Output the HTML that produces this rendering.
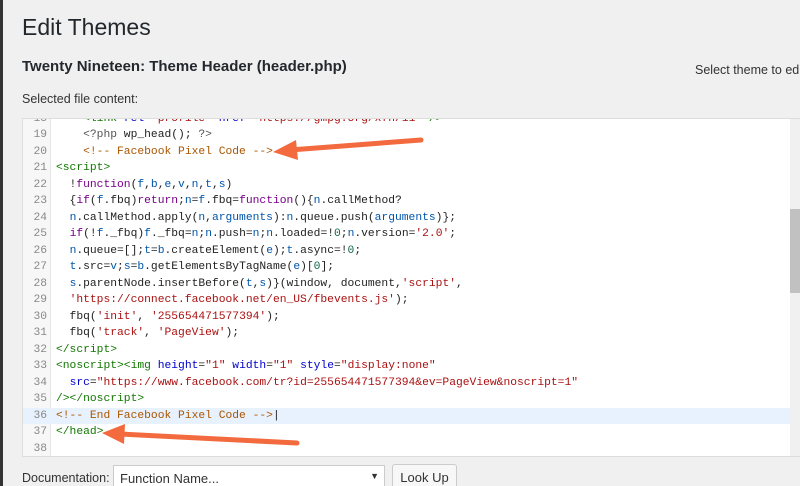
<!DOCTYPE html>
<html><head><style>
html,body{margin:0;width:800px;height:486px;overflow:hidden}
body{background:#f0f0f1;font-family:"Liberation Sans",sans-serif;position:relative;color:#23282d}
.lb{position:absolute;left:0;top:0;width:3px;height:486px;background:#333}
h1{position:absolute;left:22px;top:14px;margin:0;font-weight:400;font-size:23px;color:#23282d}
h2{position:absolute;left:22px;top:58px;margin:0;font-weight:600;font-size:15px;color:#23282d}
.sel{position:absolute;left:22px;top:92px;font-size:12.5px;color:#333}
.st{position:absolute;left:695px;top:63px;font-size:12.5px;color:#333;white-space:nowrap}
.ed{position:absolute;left:22px;top:118px;width:778px;height:337px;background:#fff;border:1px solid #ddd;border-right:none;overflow:hidden}
.gut{position:absolute;left:0;top:0;width:27px;height:100%;background:#f7f7f7;border-right:1px solid #e5e5e5}
.code{position:absolute;left:0;top:-8.5px;font-family:"Liberation Mono",monospace;font-size:11.3px;line-height:16.5px;white-space:pre;color:#222}
.ln{display:inline-block;width:24px;text-align:right;color:#888;margin-right:9px}
.hl{background:#e8f2fe;width:767px;display:block}
.t{color:#170}.a{color:#00c}.s{color:#a11}.k{color:#708}.v{color:#05a}.c{color:#a50}.m{color:#555}.n{color:#164}
.sb{position:absolute;right:0;top:0;width:11px;height:100%;background:#f0f0f0}
.th{position:absolute;right:0;top:90px;width:11px;height:84px;background:#c1c1c1}
.doc{position:absolute;left:22px;top:471px;font-size:12.5px;color:#333}
.fn{position:absolute;left:113px;top:465px;width:272px;height:24px;background:#fff;border:1px solid #ccc;box-sizing:border-box;font-size:13px;padding:5px 6px;color:#333;white-space:nowrap}
.fn span{position:absolute;right:5px;top:5px;font-size:9px}
.btn{position:absolute;left:392px;top:464px;width:65px;height:26px;background:#f7f7f7;border:1px solid #ccc;border-radius:3px;box-sizing:border-box;font-size:13px;padding:5px 0;text-align:center;color:#333;white-space:nowrap}
</style></head><body>
<div class="lb"></div>
<h1>Edit Themes</h1>
<h2>Twenty Nineteen: Theme Header (header.php)</h2>
<div class="sel">Selected file content:</div>
<div class="st">Select theme to edit</div>
<div class="ed">
<div class="gut"></div>
<div class="code"><span class="ln">18</span>    <span class="t">&lt;link</span> <span class="a">rel</span>=<span class="s">"profile"</span> <span class="a">href</span>=<span class="s">"https://gmpg.org/xfn/11"</span> <span class="t">/&gt;</span>
<span class="ln">19</span>    <span class="m">&lt;?php</span> wp_head(); <span class="m">?&gt;</span>
<span class="ln">20</span>    <span class="c">&lt;!-- Facebook Pixel Code --&gt;</span>
<span class="ln">21</span><span class="t">&lt;script&gt;</span>
<span class="ln">22</span>  !<span class="k">function</span>(<span class="v">f</span>,<span class="v">b</span>,<span class="v">e</span>,<span class="v">v</span>,<span class="v">n</span>,<span class="v">t</span>,<span class="v">s</span>)
<span class="ln">23</span>  {<span class="k">if</span>(<span class="v">f</span>.fbq)<span class="k">return</span>;<span class="v">n</span>=<span class="v">f</span>.fbq=<span class="k">function</span>(){<span class="v">n</span>.callMethod?
<span class="ln">24</span>  <span class="v">n</span>.callMethod.apply(<span class="v">n</span>,<span class="v">arguments</span>):<span class="v">n</span>.queue.push(<span class="v">arguments</span>)};
<span class="ln">25</span>  <span class="k">if</span>(!<span class="v">f</span>._fbq)<span class="v">f</span>._fbq=<span class="v">n</span>;<span class="v">n</span>.push=<span class="v">n</span>;<span class="v">n</span>.loaded=!<span class="n">0</span>;<span class="v">n</span>.version=<span class="s">'2.0'</span>;
<span class="ln">26</span>  <span class="v">n</span>.queue=[];<span class="v">t</span>=<span class="v">b</span>.createElement(<span class="v">e</span>);<span class="v">t</span>.async=!<span class="n">0</span>;
<span class="ln">27</span>  <span class="v">t</span>.src=<span class="v">v</span>;<span class="v">s</span>=<span class="v">b</span>.getElementsByTagName(<span class="v">e</span>)[<span class="n">0</span>];
<span class="ln">28</span>  <span class="v">s</span>.parentNode.insertBefore(<span class="v">t</span>,<span class="v">s</span>)}(window, document,<span class="s">'script'</span>,
<span class="ln">29</span>  <span class="s">'https://connect.facebook.net/en_US/fbevents.js'</span>);
<span class="ln">30</span>  fbq(<span class="s">'init'</span>, <span class="s">'255654471577394'</span>);
<span class="ln">31</span>  fbq(<span class="s">'track'</span>, <span class="s">'PageView'</span>);
<span class="ln">32</span><span class="t">&lt;/script&gt;</span>
<span class="ln">33</span><span class="t">&lt;noscript&gt;&lt;img</span> <span class="a">height</span>=<span class="s">"1"</span> <span class="a">width</span>=<span class="s">"1"</span> <span class="a">style</span>=<span class="s">"display:none"</span>
<span class="ln">34</span>  <span class="a">src</span>=<span class="s">"https://www.facebook.com/tr?id=255654471577394&amp;ev=PageView&amp;noscript=1"</span>
<span class="ln">35</span><span class="t">/&gt;&lt;/noscript&gt;</span>
<span class="hl"><span class="ln">36</span><span class="c">&lt;!-- End Facebook Pixel Code --&gt;</span>|</span><span class="ln">37</span><span class="t">&lt;/head&gt;</span>
<span class="ln">38</span>
</div>
<div class="sb"><div class="th"></div></div>
</div>
<svg style="position:absolute;left:0;top:0" width="800" height="486">
<g fill="#f26a3d" stroke="#f26a3d">
<line x1="421" y1="140" x2="290" y2="150" stroke-width="5" stroke-linecap="round"/>
<polygon points="273,152 296,140 298,160" stroke="none"/>
<line x1="297" y1="443" x2="120" y2="434" stroke-width="5" stroke-linecap="round"/>
<polygon points="102,433 125,424 124,444" stroke="none"/>
</g></svg>
<div class="doc">Documentation:</div>
<div class="fn">Function Name...<span>▼</span></div>
<div class="btn">Look Up</div>
</body></html>
